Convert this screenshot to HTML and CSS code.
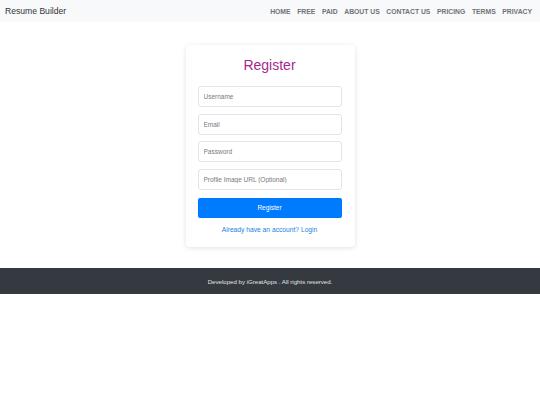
FILE: index.html
```html
<!DOCTYPE html>
<html>
<head>
<meta charset="utf-8">
<link rel="stylesheet" href="styles.css">
</head>
<body>
<nav class="navbar">
  <span class="brand">Resume Builder</span>
  <ul class="nav-links">
    <li>HOME</li><li>FREE</li><li>PAID</li><li>ABOUT US</li><li>CONTACT US</li><li>PRICING</li><li>TERMS</li><li>PRIVACY</li>
  </ul>
</nav>
<main class="main">
  <div class="card">
    <h2 class="title">Register</h2>
    <form class="form">
      <input class="field" type="text" placeholder="Username">
      <input class="field" type="text" placeholder="Email">
      <input class="field" type="password" placeholder="Password">
      <input class="field" type="text" placeholder="Profile Image URL (Optional)">
      <button class="btn" type="button">Register</button>
    </form>
    <a class="login" href="#">Already have an account? Login</a>
  </div>
</main>
<footer class="footer">Developed by iGreatApps . All rights reserved.</footer>
</body>
</html>
```
FILE: styles.css
```css
* { box-sizing: border-box; }
body {
  margin: 0;
  font-family: "Liberation Sans", Arial, sans-serif;
  background: #fff;
  color: #212529;
}
.navbar {
  height: 22px;
  background: #f8f9fa;
  display: flex;
  align-items: center;
  justify-content: space-between;
  padding: 0 8px 0 5px;
}
.brand {
  font-size: 8.6px;
  color: #333;
}
.nav-links {
  list-style: none;
  margin: 0;
  padding: 0;
  display: flex;
  gap: 6.6px;
  font-size: 6.8px;
  font-weight: bold;
  color: #707377;
}
.main {
  display: flex;
  justify-content: center;
  padding: 23px 0 21px;
}
.card {
  width: 169px;
  height: 202px;
  background: #fff;
  border-radius: 4px;
  box-shadow: 0 1px 5px rgba(0,0,0,0.12);
  padding: 11px 13px 0 12px;
  display: flex;
  flex-direction: column;
  align-items: center;
}
.title {
  margin: 0 0 12px;
  font-size: 14px;
  font-weight: normal;
  color: #a6288f;
  line-height: 18px;
}
.form {
  width: 100%;
  display: flex;
  flex-direction: column;
  gap: 6.5px;
}
.field {
  width: 100%;
  height: 21px;
  border: 1px solid #e2e4e7;
  border-radius: 3px;
  padding: 0 5px;
  font-family: inherit;
  font-size: 6.5px;
  color: #495057;
  background: #fff;
}
.field::placeholder { color: #757b80; }
.btn {
  margin-top: 1.5px;
  width: 100%;
  height: 20px;
  border: none;
  border-radius: 2px;
  background: #007bff;
  color: #fff;
  font-family: inherit;
  font-size: 6.5px;
}
.login {
  margin-top: 8px;
  font-size: 6.7px;
  color: #1a7fe0;
  text-decoration: none;
}
.footer {
  height: 26px;
  background: #343a40;
  color: #e2e3e5;
  font-size: 6.1px;
  display: flex;
  align-items: center;
  justify-content: center;
}
```
